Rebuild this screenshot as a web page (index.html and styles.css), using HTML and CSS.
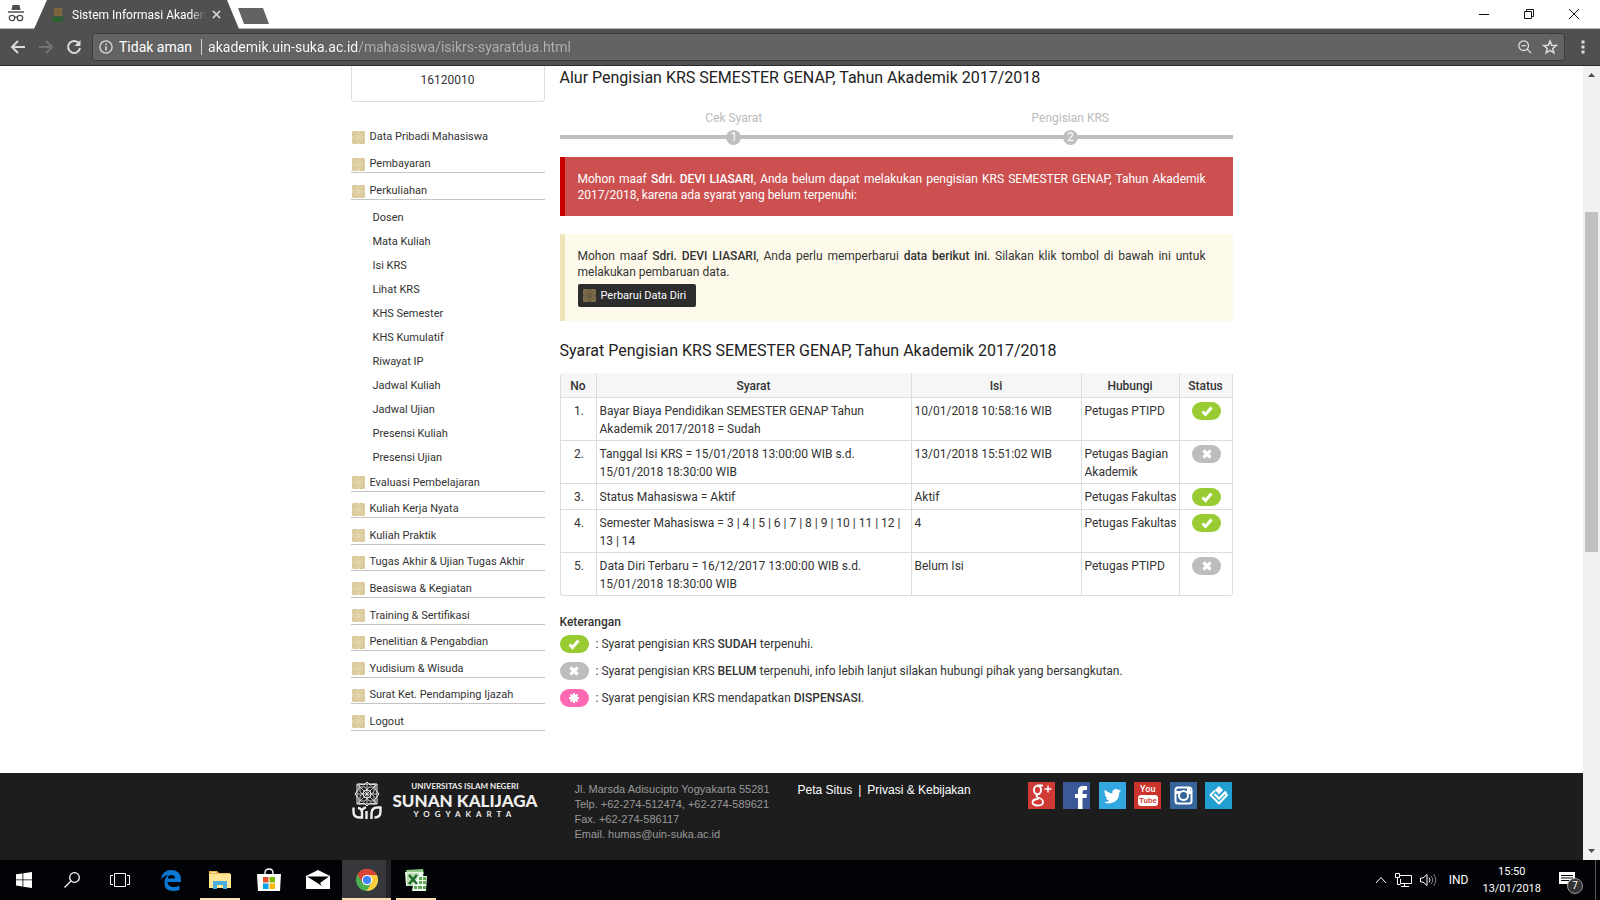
FILE: index.html
```html
<!DOCTYPE html>
<html lang="id">
  <head>
    <meta charset="UTF-8" />
    <meta name="viewport" content="width=device-width, initial-scale=1.0" />
    <title>Sistem Informasi Akademik</title>
    <link rel="stylesheet" href="styles.css">
  </head>

  <body>
    <!-- shared icons -->
    <svg class="defs" aria-hidden="true">
      <symbol id="motif" viewBox="0 0 13 13">
        <path class="motif-bg" d="M1 0h4.500l1 .7 1-.7H12l1 1v4.500l-.7 1 .7 1V12l-1 1H7.500l-1-.7-1 .7H1l-1-1V7.500l.7-1-.7-1V1z" />
        <path class="motif-line" d="M2 2l9 9M11 2l-9 9M4.500 1L6.500 3l2-2M4.500 12l2-2 2 2M1 4.500l2 2-2 2M12 4.500l-2 2 2 2" />
        <circle class="motif-line" cx="6.500" cy="6.500" r="2" />
      </symbol>
      <symbol id="ok" viewBox="0 0 12 12"><path d="M1.500 6.500L4.500 9.500L10.500 2.500" fill="none" stroke="#fff" stroke-width="3" /></symbol>
      <symbol id="no" viewBox="0 0 12 12"><path d="M2.500 2.500l7 7M9.500 2.500l-7 7" fill="none" stroke="#fff" stroke-width="3.200" /></symbol>
      <symbol id="burst" viewBox="0 0 12 12"><path d="M6 1v10M1 6h10M2.500 2.500l7 7M9.500 2.500l-7 7" fill="none" stroke="#fff" stroke-width="2" /><circle cx="6" cy="6" r="3.500" fill="#fff" /></symbol>
    </svg>

    <!-- browser -->
    <header class="browser">
      <div class="tabs">
        <svg class="incognito" viewBox="0 0 16 18" width="16" height="18">
          <path d="M4.500 1h7l1 5h-9z" fill="#505050" />
          <path d="M0 8h16" stroke="#505050" stroke-width="1.500" />
          <g fill="none" stroke="#505050" stroke-width="1.300"><circle cx="4" cy="14" r="2.700" /><circle cx="12" cy="14" r="2.700" /><path d="M6.700 13.500q1.300-1 2.600 0" /></g>
        </svg>
        <div class="tab">
          <svg viewBox="0 0 12 16" width="12" height="16">
            <path d="M2 1h8v8H2z" fill="#8a6f42" /><path d="M4 1v8M6 1v8M8 1v8M2 3h8M2 5h8M2 7h8" stroke="#6a5736" stroke-width=".6" />
            <path d="M1.500 9.500q0 4 2.500 4t2-4q0 4 2 4t2.500-4" fill="none" stroke="#176b22" stroke-width="2" />
          </svg>
          <span class="tab-title">Sistem Informasi Akademik</span>
          <button class="tab-close" aria-label="Tutup tab"><svg viewBox="0 0 10 10" width="9" height="9"><path d="M1 1l8 8M9 1L1 9" stroke="#d0d0d0" stroke-width="1.800" /></svg></button>
        </div>
        <button class="new-tab" aria-label="Tab baru"></button>
        <div class="window-buttons">
          <button aria-label="Minimalkan"><svg viewBox="0 0 12 12" width="12" height="12"><path d="M1 6.500h10" /></svg></button>
          <button aria-label="Pulihkan"><svg viewBox="0 0 12 12" width="12" height="12"><path d="M1.500 3.500h7v7h-7zM3.500 3.500v-2h7v7h-2" /></svg></button>
          <button aria-label="Tutup"><svg viewBox="0 0 12 12" width="12" height="12"><path d="M1 1l10 10M11 1L1 11" /></svg></button>
        </div>
      </div>
      <div class="toolbar">
        <button aria-label="Kembali"><svg viewBox="0 0 16 16" width="16" height="16"><path d="M15 8H2M8 2L2 8l6 6" /></svg></button>
        <button class="off" aria-label="Maju"><svg viewBox="0 0 16 16" width="16" height="16"><path d="M1 8h13M8 2l6 6-6 6" /></svg></button>
        <button aria-label="Muat ulang"><svg viewBox="0 0 16 16" width="16" height="16"><path d="M13 4.500A6 6 0 1 0 14 9" /><path d="M14.500 1v6h-6z" class="solid" /></svg></button>
        <div class="omnibox">
          <svg viewBox="0 0 16 16" width="14" height="14" fill="none" stroke="#eee" stroke-width="1.500"><circle cx="8" cy="8" r="7" /><path d="M8 7v5M8 4v1.800" stroke-width="1.800" /></svg>
          <span class="unsafe">Tidak aman</span>
          <input class="url" type="text" aria-label="Alamat" value="akademik.uin-suka.ac.id/mahasiswa/isikrs-syaratdua.html" />
          <button aria-label="Perbesar"><svg viewBox="0 0 16 16" width="14" height="14"><circle cx="6.500" cy="6.500" r="5.500" /><path d="M10.500 10.500L15 15M4 6.500h5" /></svg></button>
          <button aria-label="Bookmark"><svg viewBox="0 0 16 16" width="16" height="16"><path d="M8 2l1.700 4.200 4.500.3-3.500 2.900 1.200 4.400L8 11.400l-3.900 2.400 1.200-4.400L1.800 6.500l4.500-.3z" /></svg></button>
        </div>
        <button class="menu-button" aria-label="Menu"><svg viewBox="0 0 4 16" width="4" height="16"><path class="solid" d="M.5 1.500h3v3h-3zM.5 6.500h3v3h-3zM.5 11.500h3v3h-3z" /></svg></button>
      </div>
    </header>

    <div class="viewport">
      <div class="page">
        <div class="container content">
          <!-- left menu -->
          <nav class="sidebar">
            <div class="profile">16120010</div>
            <ul class="menu top">
              <li><a href="#"><svg><use href="#motif" /></svg>Data Pribadi Mahasiswa</a></li>
              <li><a href="#"><svg><use href="#motif" /></svg>Pembayaran</a></li>
              <li><a href="#"><svg><use href="#motif" /></svg>Perkuliahan</a></li>
            </ul>
            <ul class="submenu">
              <li><a href="#">Dosen</a></li>
              <li><a href="#">Mata Kuliah</a></li>
              <li><a href="#">Isi KRS</a></li>
              <li><a href="#">Lihat KRS</a></li>
              <li><a href="#">KHS Semester</a></li>
              <li><a href="#">KHS Kumulatif</a></li>
              <li><a href="#">Riwayat IP</a></li>
              <li><a href="#">Jadwal Kuliah</a></li>
              <li><a href="#">Jadwal Ujian</a></li>
              <li><a href="#">Presensi Kuliah</a></li>
              <li><a href="#">Presensi Ujian</a></li>
            </ul>
            <ul class="menu rest">
              <li><a href="#"><svg><use href="#motif" /></svg>Evaluasi Pembelajaran</a></li>
              <li><a href="#"><svg><use href="#motif" /></svg>Kuliah Kerja Nyata</a></li>
              <li><a href="#"><svg><use href="#motif" /></svg>Kuliah Praktik</a></li>
              <li><a href="#"><svg><use href="#motif" /></svg>Tugas Akhir &amp; Ujian Tugas Akhir</a></li>
              <li><a href="#"><svg><use href="#motif" /></svg>Beasiswa &amp; Kegiatan</a></li>
              <li><a href="#"><svg><use href="#motif" /></svg>Training &amp; Sertifikasi</a></li>
              <li><a href="#"><svg><use href="#motif" /></svg>Penelitian &amp; Pengabdian</a></li>
              <li><a href="#"><svg><use href="#motif" /></svg>Yudisium &amp; Wisuda</a></li>
              <li><a href="#"><svg><use href="#motif" /></svg>Surat Ket. Pendamping Ijazah</a></li>
              <li><a href="#"><svg><use href="#motif" /></svg>Logout</a></li>
            </ul>
          </nav>

          <main class="main">
            <h2>Alur Pengisian KRS SEMESTER GENAP, Tahun Akademik 2017/2018</h2>
            <ol class="steps">
              <li>Cek Syarat<span class="num">1</span></li>
              <li>Pengisian KRS<span class="num">2</span></li>
            </ol>

            <div class="alert alert-red">
              <p>Mohon maaf <b>Sdri. DEVI LIASARI</b>, Anda belum dapat melakukan pengisian KRS SEMESTER GENAP, Tahun Akademik 2017/2018, karena ada syarat yang belum terpenuhi:</p>
            </div>
            <div class="alert alert-yellow">
              <p>Mohon maaf <b>Sdri. DEVI LIASARI</b>, Anda perlu memperbarui <b>data berikut ini</b>. Silakan klik tombol di bawah ini untuk melakukan pembaruan data.</p>
              <button class="update"><svg><use href="#motif" /></svg>Perbarui Data Diri</button>
            </div>

            <h2>Syarat Pengisian KRS SEMESTER GENAP, Tahun Akademik 2017/2018</h2>
            <table class="syarat">
              <colgroup><col class="c-no"><col class="c-syarat"><col class="c-isi"><col class="c-hub"><col class="c-status"></colgroup>
              <thead>
                <tr><th>No</th><th>Syarat</th><th>Isi</th><th>Hubungi</th><th>Status</th></tr>
              </thead>
              <tbody>
                <tr><td>1.</td><td>Bayar Biaya Pendidikan SEMESTER GENAP Tahun Akademik 2017/2018 = Sudah</td><td>10/01/2018 10:58:16 WIB</td><td>Petugas PTIPD</td><td><span class="badge green"><svg><use href="#ok" /></svg></span></td></tr>
                <tr><td>2.</td><td>Tanggal Isi KRS = 15/01/2018 13:00:00 WIB s.d. 15/01/2018 18:30:00 WIB</td><td>13/01/2018 15:51:02 WIB</td><td>Petugas Bagian Akademik</td><td><span class="badge gray"><svg><use href="#no" /></svg></span></td></tr>
                <tr><td>3.</td><td>Status Mahasiswa = Aktif</td><td>Aktif</td><td>Petugas Fakultas</td><td><span class="badge green"><svg><use href="#ok" /></svg></span></td></tr>
                <tr><td>4.</td><td>Semester Mahasiswa = 3 | 4 | 5 | 6 | 7 | 8 | 9 | 10 | 11 | 12 | 13 | 14</td><td>4</td><td>Petugas Fakultas</td><td><span class="badge green"><svg><use href="#ok" /></svg></span></td></tr>
                <tr><td>5.</td><td>Data Diri Terbaru = 16/12/2017 13:00:00 WIB s.d. 15/01/2018 18:30:00 WIB</td><td>Belum Isi</td><td>Petugas PTIPD</td><td><span class="badge gray"><svg><use href="#no" /></svg></span></td></tr>
              </tbody>
            </table>

            <h3>Keterangan</h3>
            <ul class="legend">
              <li><span class="badge green"><svg><use href="#ok" /></svg></span><span>: Syarat pengisian KRS <b>SUDAH</b> terpenuhi.</span></li>
              <li><span class="badge gray"><svg><use href="#no" /></svg></span><span>: Syarat pengisian KRS <b>BELUM</b> terpenuhi, info lebih lanjut silakan hubungi pihak yang bersangkutan.</span></li>
              <li><span class="badge pink"><svg><use href="#burst" /></svg></span><span>: Syarat pengisian KRS mendapatkan <b>DISPENSASI</b>.</span></li>
            </ul>
          </main>
        </div>

        <footer class="footer">
          <div class="container footer-row">
            <div class="logo">
              <svg viewBox="0 0 30 38" width="30" height="38" fill="none" stroke="#eee">
                <path d="M5 2h20v20H5zM15 0l3 3 5-1 0 5 4 5-4 5 0 5-5-1-3 3-3-3-5 1 0-5-4-5 4-5 0-5 5 1z" stroke-width="1" />
                <path d="M8 5h5l2 3 2-3h5v5l-3 2 3 2v5h-5l-2-3-2 3H8v-5l3-2-3-2zM5 2l20 20M25 2L5 22M15 2v20M5 12h20" stroke-width=".8" />
                <circle cx="15" cy="12" r="4" stroke-width="1" />
                <path d="M1.500 25.500v4q0 6 6 6h2.500v-5q0-4-4-4.500M14.500 29v8M19.500 37v-5.500q0-6 6-6h3v4q0 6-6 6M10 28q2-2.500 4-2.500" stroke-width="2.400" />
              </svg>
              <div class="logo-text">
                <span>UNIVERSITAS ISLAM NEGERI</span>
                <strong>SUNAN KALIJAGA</strong>
                <span class="city">YOGYAKARTA</span>
              </div>
            </div>
            <address>Jl. Marsda Adisucipto Yogyakarta 55281<br>Telp. +62-274-512474, +62-274-589621<br>Fax. +62-274-586117<br>Email. humas@uin-suka.ac.id</address>
            <div class="links"><a href="#">Peta Situs</a><span>|</span><a href="#">Privasi &amp; Kebijakan</a></div>
            <div class="social">
              <a class="gplus" href="#" aria-label="Google+"><svg viewBox="0 0 27 27"><g fill="none" stroke="#fff"><ellipse cx="9.500" cy="8" rx="3.500" ry="4.300" stroke-width="2" /><path d="M9 3.500h6M10 12q-3 2 0 3.500 5 1.500 5 4.500 0 3.500-5 3.500t-5.500-3q0-3.500 6-3.500" stroke-width="1.800" /><path d="M20 3.500v7M16.500 7h7" stroke-width="1.400" /></g></svg></a>
              <a class="fb" href="#" aria-label="Facebook"><svg viewBox="0 0 27 27"><path fill="#fff" d="M15 27V16h-3v-4h3V9q0-5 5-5h4v4h-2.500q-2 0-2 2v2H24l-.6 4h-3.900v11z" /></svg></a>
              <a class="tw" href="#" aria-label="Twitter"><svg viewBox="0 0 27 27"><path fill="#fff" d="M22 8.500q-1 .6-2 .7 1.200-.8 1.500-2-1 .6-2.200.9a3.600 3.600 0 0 0-6 3.300Q9 11.200 6 7.800q-1.500 3 1.100 4.900-.8 0-1.500-.4.100 2.700 2.800 3.500-.8.200-1.500.1.900 2.300 3.300 2.500-2.300 1.700-5.200 1.500 2.500 1.500 5.500 1.500 9.600-.6 9.800-10.800 1-.8 1.700-2.100z" /></svg></a>
              <a class="yt" href="#" aria-label="YouTube"><span>You</span><em>Tube</em></a>
              <a class="ig" href="#" aria-label="Instagram"><svg viewBox="0 0 27 27"><rect x="5.500" y="5.500" width="16" height="16" rx="2.500" fill="none" stroke="#fff" stroke-width="2" /><path d="M5 9h5v3H5zM17 9h5v3h-5zM17 6h3v3h-3z" fill="#fff" /><circle cx="13.500" cy="13.500" r="4.500" fill="none" stroke="#fff" stroke-width="2" /></svg></a>
              <a class="fs" href="#" aria-label="Foursquare"><svg viewBox="0 0 27 27"><path d="M10 8.500L5.500 13l8.500 8.500L22 13l-2-2" fill="none" stroke="#fff" stroke-width="2" stroke-linejoin="round" /><path d="M9.500 12l4.500 4.500 7-7" fill="none" stroke="#fff" stroke-width="2.400" /><path d="M10 8L14 4l4 4-4 4.500z" fill="#fff" /></svg></a>
            </div>
          </div>
        </footer>
      </div>

      <div class="scrollbar">
        <svg viewBox="0 0 9 5" width="7" height="4"><path d="M0 5l4.500-5L9 5z" /></svg>
        <div class="track"><div class="thumb"></div></div>
        <svg viewBox="0 0 9 5" width="7" height="4"><path d="M0 0l4.500 5L9 0z" /></svg>
      </div>
    </div>

    <!-- windows taskbar -->
    <div class="taskbar">
      <button class="sys" aria-label="Start"><svg viewBox="0 0 16 16" width="16" height="16"><path fill="#fff" d="M0 2.300l6.500-.9v6.100H0zM7.300 1.300L16 0v7.500H7.300zM0 8.300h6.500v6.200L0 13.600zM7.300 8.300H16V16l-8.700-1.200z" /></svg></button>
      <button class="sys" aria-label="Cari"><svg viewBox="0 0 16 16" width="16" height="16" fill="none" stroke="#fff" stroke-width="1.300"><circle cx="10.500" cy="5.500" r="4.800" /><path d="M7 9l-6.500 6.500" /></svg></button>
      <button class="sys" aria-label="Task view"><svg viewBox="0 0 20 16" width="20" height="16" fill="none" stroke="#fff"><path d="M4.500 1.500h11v13h-11zM3 3.500H.5v9H3M17 3.500h2.500v9H17" /></svg></button>
      <div class="apps">
        <button aria-label="Edge"><svg viewBox="0 0 20 21" width="20" height="21"><path fill="#0a78d4" d="M0 9.500Q1 0 10.500 0 20 .5 20 10v2H6.500q.4 5 6.500 5 3 0 5.500-1.500V20q-3 1-6.500 1-8.500 0-8.500-8Q3.500 7 8 4.800 3 5.500 0 9.500zM6.600 8.600H14Q14 5 10.500 5T6.600 8.600z" /></svg></button>
        <button class="open" aria-label="File Explorer"><svg viewBox="0 0 22 20" width="22" height="20"><path fill="#e9b84a" d="M0 1h8l2 2h11v5H0z" /><path fill="#ffe596" d="M0 4h22v14H0z" /><path fill="#47aede" d="M4 11h14v8h-4v-4H8v4H4z" /><path fill="#fff" opacity=".6" d="M2 2h5v1H2z" /></svg></button>
        <button aria-label="Store"><svg viewBox="0 0 24 24" width="24" height="24"><path d="M8 7V5q0-4 4-4t4 4v2" fill="none" stroke="#fff" stroke-width="1.400" /><path fill="#fff" d="M0 6h24l-1 17H1z" /><path fill="#e34f26" d="M6 9h5.500v5.500H6z" /><path fill="#7eb900" d="M12.500 9H18v5.500h-5.500z" /><path fill="#00a3ee" d="M6 15.500h5.500V21H6z" /><path fill="#fdb813" d="M12.500 15.500H18V21h-5.500z" /></svg></button>
        <button aria-label="Mail"><svg viewBox="0 0 24 20" width="24" height="20"><path fill="#fff" d="M0 6L12 0l12 6v13H0z" /><path fill="#020307" d="M1 6.500h22L14 13l2 3z" /></svg></button>
        <button class="open current" aria-label="Chrome"><svg viewBox="0 0 22 22" width="22" height="22"><circle cx="11" cy="11" r="11" fill="#4caf50" /><path fill="#db4437" d="M1.500 5.500A11 11 0 0 1 20.500 5.500L11 11z" /><path fill="#db4437" d="M1.500 5.500L6.500 14 11 6h9.700Q17 0 11 0 5 0 1.500 5.500z" /><path fill="#ffcd40" d="M11 6h9.800A11 11 0 0 1 10.500 22L15.500 13.500z" /><circle cx="11" cy="11" r="5.200" fill="#fff" /><circle cx="11" cy="11" r="4.100" fill="#4285f4" /></svg></button>
        <button class="open" aria-label="Excel"><svg viewBox="0 0 23 22" width="23" height="22"><path fill="#8fc98a" d="M2 1l17-1 1 5H3z" /><path fill="#e9f5e4" d="M1 3h18l1 14H2z" /><path fill="#b9deb2" d="M3 4h12v13H3z" /><path fill="#f4fbf1" d="M10 11h3V7h10l-1 15H8l1-6z" /><path d="M15 8h3v3h-3zM19 8h3v3h-3zM15 12h3v3h-3zM19 12h3v3h-3zM10 17h3v3h-3zM14 17h4v3h-4zM19 17h3v3h-3z" fill="#5cab55" /><path d="M5 6l8 9M13 6l-8 9" stroke="#1d6b2c" stroke-width="2.600" /></svg></button>
      </div>
      <div class="tray">
        <svg class="chevron" viewBox="0 0 12 8" width="12" height="8"><path d="M1 7l5-5.500L11 7" /></svg>
        <svg viewBox="0 0 17 14" width="17" height="14"><path d="M4.500 2.500h12v8h-11V6M9.500 10.500v3M6 13.500h8M.5.500h4v4h-4zM2.500 4.500v7h3" /></svg>
        <svg viewBox="0 0 17 14" width="17" height="14"><path d="M.5 5v4h2.500l4 3.500v-11L3 5z" /><path d="M9 4.500q2 2.500 0 5" /><path d="M11 3q3.500 4 0 8M13.500 1q4.500 6 0 12" opacity=".5" /></svg>
        <span class="lang">IND</span>
        <time class="clock">15:50<br>13/01/2018</time>
        <button class="notif" aria-label="Notifikasi"><svg viewBox="0 0 16 16" width="16" height="16"><path fill="#fff" d="M0 0h16v12h-5v3l-3-3H0z" /><path d="M2 3.500h12M2 6h12M2 8.500h8" stroke="#020307" /></svg><span>7</span></button>
      </div>
    </div>
  </body>
</html>
```

FILE: styles.css
```css
* {
  box-sizing: border-box;
  margin: 0;
  padding: 0;
}
body {
  display: flex;
  flex-direction: column;
  height: 100vh;
  overflow: hidden;
  font-family: Roboto, "Noto Sans", sans-serif;
  font-size: 12px;
  color: #333;
  background: #fff;
}
ul,
ol {
  list-style: none;
}
a {
  color: inherit;
  text-decoration: none;
}
button {
  border: 0;
  background: none;
  font: inherit;
  color: inherit;
}
b {
  font-weight: 500;
}
.defs {
  position: absolute;
  width: 0;
  height: 0;
}

/* browser */
.tabs {
  display: flex;
  height: 29px;
  border-bottom: 1px solid #b5b9b5;
}
.incognito {
  margin: 4px 10px 0 8px;
}
.tab {
  display: flex;
  align-items: center;
  width: 205px;
  height: 29px;
  padding: 0 18px;
  color: #fff;
  background: #505050;
  clip-path: polygon(13px 0, 193px 0, 100% 100%, 0 100%);
}
.tab-title {
  flex: 1;
  margin-left: 8px;
  overflow: hidden;
  white-space: nowrap;
  -webkit-mask-image: linear-gradient(to right, #000 88%, transparent);
  mask-image: linear-gradient(to right, #000 88%, transparent);
}
.tab-close {
  display: flex;
  margin-left: 6px;
}
.new-tab {
  width: 34px;
  height: 16px;
  margin: 8px 0 0 -3px;
  background: #636363;
  clip-path: polygon(2px 0, 27px 0, 33px 100%, 8px 100%);
}
.window-buttons {
  display: flex;
  margin-left: auto;
  padding-right: 4px;
}
.window-buttons button {
  width: 45px;
  height: 26px;
}
.window-buttons svg {
  vertical-align: middle;
  fill: none;
  stroke: #111;
}
.toolbar {
  display: flex;
  align-items: center;
  gap: 12px;
  height: 37px;
  padding: 0 15px 0 10px;
  background: #505050;
  border-bottom: 1px solid #2c2c2c;
}
.toolbar button {
  display: flex;
}
.toolbar svg {
  fill: none;
  stroke: #dcdcdc;
  stroke-width: 2;
}
.toolbar .solid {
  fill: #dcdcdc;
  stroke: none;
}
.toolbar .off {
  opacity: 0.25;
}
.omnibox {
  display: flex;
  flex: 1;
  align-items: center;
  height: 28px;
  margin-left: -2px;
  padding: 0 6px;
  font-size: 14px;
  color: #fff;
  background: #636363;
  border: 1px solid #3c3c3c;
  border-radius: 3px;
}
.omnibox svg {
  stroke-width: 1.5px;
}
.omnibox button {
  margin-left: 10px;
}
.unsafe {
  margin: 0 6px;
  padding-right: 9px;
  line-height: 16px;
  border-right: 1px solid #d0d0d0;
}
.url {
  flex: 1;
  border: 0;
  font: inherit;
  color: transparent;
  background: linear-gradient(to right, #fff 150px, #b0b0b0 150px);
  -webkit-background-clip: text;
  background-clip: text;
}
.menu-button {
  margin-left: 4px;
}

/* page */
.viewport {
  display: flex;
  flex: 1;
  min-height: 0;
}
.page {
  display: flex;
  flex: 1;
  flex-direction: column;
  overflow: hidden;
}
.container {
  width: 882px;
  max-width: 100%;
  margin: 0 auto;
}
.content {
  display: flex;
  gap: 15px;
  padding-bottom: 42px;
}
.sidebar {
  display: flex;
  flex-direction: column;
  width: 194px;
  font-size: 11px;
}
.profile {
  height: 36px;
  margin-bottom: 17px;
  font-size: 12px;
  line-height: 28px;
  text-align: center;
  border: 1px solid #ddd;
  border-top: 0;
  border-radius: 0 0 3px 3px;
}
.menu li {
  display: flex;
  align-items: flex-end;
  min-height: 26px;
  border-bottom: 1px solid #c4c4c4;
}
.menu.top li {
  height: 27px;
}
.menu.top li:first-child {
  border-color: transparent;
}
.menu.rest {
  display: flex;
  flex: 1;
  flex-direction: column;
}
.menu.rest li {
  flex: 1;
}
.menu a {
  display: flex;
  align-items: center;
  gap: 5px;
  padding-left: 1px;
  line-height: 16px;
}
.menu svg {
  width: 13px;
  height: 13px;
}
.motif-bg {
  fill: var(--motif, #dac899);
}
.motif-line {
  fill: none;
  stroke: var(--motif-line, #efe5c8);
  stroke-width: 0.6;
}
.submenu {
  padding-top: 1px;
}
.submenu li {
  padding: 9px 0 0 22px;
  line-height: 15px;
}

.main {
  flex: 1;
  min-width: 0;
  padding-bottom: 18px;
}
h2 {
  font-size: 16px;
  font-weight: 400;
  line-height: 24px;
  color: #222;
}
.steps {
  display: flex;
  margin: 16px 0 12px;
  padding-top: 2px;
  color: #bbb;
  background: linear-gradient(#bfbfbf, #bfbfbf) 0 29px / 100% 4px no-repeat;
}
.steps li {
  display: flex;
  flex: 1;
  flex-direction: column;
  align-items: center;
  padding-left: 12px;
  line-height: 20px;
}
.num {
  width: 15px;
  height: 15px;
  margin-top: 2px;
  line-height: 15px;
  text-align: center;
  color: #fff;
  background: #bfbfbf;
  border-radius: 50%;
}
.alert {
  margin-bottom: 18px;
  padding: 14px 27px 13px 13px;
  line-height: 16px;
  border-left: 5px solid;
}
.alert p {
  text-align: justify;
}
.alert-red {
  color: #fff;
  background: #cc5050;
  border-color: #c80000;
}
.alert-yellow {
  padding-bottom: 14px;
  background: #fefaeb;
  border-color: #eee5b9;
}
.update {
  --motif: #80704a;
  --motif-line: #4c4534;
  display: flex;
  align-items: center;
  gap: 5px;
  height: 23px;
  margin-top: 4px;
  padding: 0 10px 0 5px;
  font-size: 11px;
  color: #fff;
  background: #2d2d2d;
  border-radius: 2px;
}
.update svg {
  width: 13px;
  height: 13px;
}

.syarat {
  width: 100%;
  margin: 10px 0 17px;
  table-layout: fixed;
  border: 1px solid #ddd;
  border-top: 0;
  border-spacing: 0;
  border-radius: 3px;
}
.c-no {
  width: 35px;
}
.c-isi {
  width: 170px;
}
.c-hub {
  width: 98px;
}
.c-status {
  width: 53px;
}
.syarat th {
  height: 24px;
  padding-top: 2px;
  font-weight: 500;
  line-height: 18px;
  background: #f6f6f6;
}
.syarat td {
  height: 26px;
  padding: 4px 1px 2px 3px;
  line-height: 18px;
  vertical-align: top;
  border-top: 1px solid #ddd;
}
.syarat th + th,
.syarat td + td {
  border-left: 1px solid #ddd;
}
.syarat td:first-child,
.syarat td:last-child {
  text-align: center;
}
.badge {
  display: inline-flex;
  align-items: center;
  justify-content: center;
  width: 29px;
  height: 18px;
  vertical-align: top;
  border-radius: 9px;
}
.badge svg {
  width: 12px;
  height: 12px;
}
.green {
  background: #9c3;
}
.gray {
  background: #bdbdbd;
}
.pink {
  background: #ff69b4;
}
h3 {
  font-size: 12px;
  font-weight: 500;
  line-height: 18px;
}
.legend {
  padding-top: 1px;
}
.legend li {
  display: flex;
  gap: 7px;
  margin-top: 3px;
  padding-bottom: 6px;
  line-height: 18px;
}

/* footer */
.footer {
  flex: 1;
  color: #fff;
  background: #1d1d1d;
  font-family: "Liberation Sans", Arial, sans-serif;
}
.footer-row {
  display: flex;
  padding-top: 9px;
}
.logo {
  display: flex;
  gap: 11px;
  width: 224px;
  padding-left: 1px;
}
.logo-text {
  display: flex;
  flex-direction: column;
  align-items: center;
  height: 38px;
  font-family: Lato, sans-serif;
  font-size: 8px;
  font-weight: 700;
  line-height: 9px;
  color: #eee;
}
.logo-text strong {
  font-size: 17px;
  line-height: 19px;
}
.logo-text .city {
  letter-spacing: 5px;
}
address {
  width: 223px;
  font-size: 11px;
  font-style: normal;
  line-height: 15px;
  color: #999;
}
.links {
  display: flex;
  gap: 6px;
  line-height: 16px;
}
.social {
  display: flex;
  justify-content: space-between;
  width: 205px;
  margin-left: auto;
}
.social a {
  width: 27px;
  height: 27px;
}
.gplus {
  background: #d03a35;
}
.fb {
  background: #3b5998;
}
.tw {
  background: #33a7df;
}
.yt {
  display: flex;
  flex-direction: column;
  align-items: center;
  padding-top: 2px;
  font-family: Roboto, sans-serif;
  font-size: 9px;
  font-weight: 500;
  line-height: 10px;
  background: #cd332d;
}
.yt em {
  width: 20px;
  margin-top: 1px;
  font-size: 8px;
  font-style: normal;
  line-height: 11px;
  text-align: center;
  color: #cd332d;
  background: #fff;
  border-radius: 3px;
}
.ig {
  background: #35659a;
}
.fs {
  background: #219fd1;
}

/* scrollbar */
.scrollbar {
  display: flex;
  flex-direction: column;
  align-items: center;
  width: 17px;
  padding: 7px 0;
  background: #f1f1f1;
}
.scrollbar svg {
  fill: #505050;
}
.track {
  flex: 1;
  width: 13px;
}
.thumb {
  height: 44%;
  margin-top: 135px;
  background: #c1c1c1;
}

/* taskbar */
.taskbar {
  display: flex;
  height: 40px;
  color: #fff;
  background: #020307;
}
.taskbar button {
  display: flex;
  align-items: center;
  justify-content: center;
}
.sys {
  width: 48px;
}
.apps {
  display: flex;
  margin-left: 2px;
}
.apps button {
  width: 49px;
}
.apps .open {
  background: linear-gradient(#ffdfae, #ffdfae) center bottom / 40px 2px no-repeat;
}
.apps .current {
  background: linear-gradient(#ffdfae, #ffdfae) center bottom / 100% 2px no-repeat, linear-gradient(to right, #37383b 44px, #242528 44px);
}
.tray {
  display: flex;
  align-items: center;
  gap: 8px;
  margin-left: auto;
  margin-right: 4px;
  padding-right: 11px;
  border-right: 1px solid #555;
}
.tray > svg {
  fill: none;
  stroke: #fff;
}
.lang {
  margin: 0 6px 0 4px;
}
.clock {
  font-size: 11px;
  line-height: 17px;
  text-align: center;
}
.notif {
  position: relative;
  width: 25px;
  margin-left: 10px;
}
.taskbar .notif {
  justify-content: flex-start;
}
.notif span {
  position: absolute;
  left: 8px;
  top: 6px;
  width: 16px;
  height: 16px;
  font-size: 10px;
  line-height: 14px;
  background: #333;
  border: 1px solid #999;
  border-radius: 50%;
}
```
